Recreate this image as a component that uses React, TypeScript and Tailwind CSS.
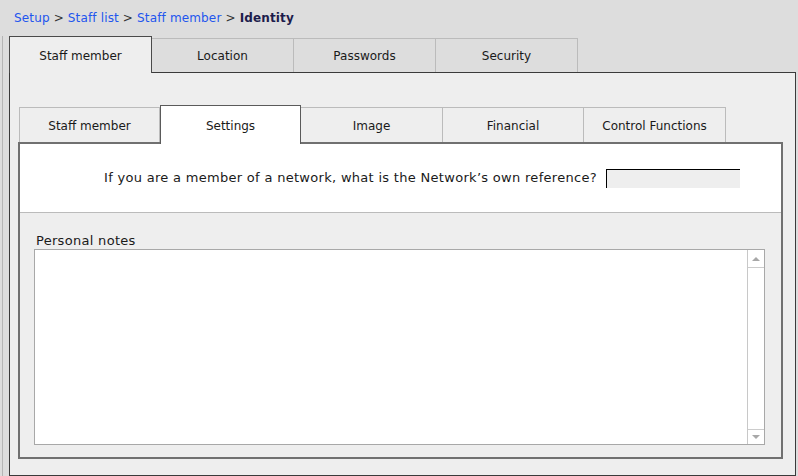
import React from "react";

const outerTabs = ["Staff member", "Location", "Passwords", "Security"];
const innerTabs = ["Staff member", "Settings", "Image", "Financial", "Control Functions"];

function Breadcrumb() {
  return (
    <div className="h-[36px] pl-[14px] pt-[10px] leading-[17px] text-[12px] tracking-[0.15px]">
      <a className="text-[#2255ee]">Setup</a>
      <span className="text-[#333333]"> &gt; </span>
      <a className="text-[#2255ee]">Staff list</a>
      <span className="text-[#333333]"> &gt; </span>
      <a className="text-[#2255ee]">Staff member</a>
      <span className="text-[#333333]"> &gt; </span>
      <span className="font-bold text-[#1c1c4c]">Identity</span>
    </div>
  );
}

function OuterTabRow() {
  return (
    <div className="relative z-10 -mb-px flex h-[37px] items-end">
      {outerTabs.map((t, i) =>
        i === 0 ? (
          <div
            key={t}
            className="flex h-[37px] w-[143px] items-center justify-center border-x border-t border-[#4a4a4a] bg-[#eeeeee] pt-px text-[#1a1a1a]"
          >
            {t}
          </div>
        ) : (
          <div
            key={t}
            className="mb-px flex h-[34px] w-[142px] items-center justify-center border-r border-t border-[#bbbbbb] bg-[#dddddd] text-[#1a1a1a]"
          >
            {t}
          </div>
        )
      )}
    </div>
  );
}

function InnerTabRow() {
  const widths = ["w-[141px] border-l", "w-[141px]", "w-[142px]", "w-[141px]", "w-[142px]"];
  return (
    <div className="relative z-10 -mb-[2px] ml-[9px] flex h-[39px] items-end">
      {innerTabs.map((t, i) =>
        i === 1 ? (
          <div
            key={t}
            className="flex h-[39px] w-[141px] items-center justify-center border-x border-t border-[#5a5a5a] bg-white pt-px text-[#1a1a1a]"
          >
            {t}
          </div>
        ) : (
          <div
            key={t}
            className={`mb-[2px] flex h-[35px] items-center justify-center border-r border-t border-[#bbbbbb] bg-[#eeeeee] pt-px text-[#1a1a1a] ${widths[i]}`}
          >
            {t}
          </div>
        )
      )}
    </div>
  );
}

function NotesBox() {
  return (
    <div className="flex h-[196px] w-[731px] border border-[#a8a8a8] bg-white">
      <textarea className="flex-1 resize-none bg-white p-1 text-[13px] outline-none" />
      <div className="flex w-[17px] flex-col justify-between border-l border-[#c8c8c8]">
        <div className="flex h-[18px] items-center justify-center border-b border-[#cccccc]">
          <svg width="8" height="5" viewBox="0 0 8 5">
            <path d="M0 5 L4 1 L8 5 Z" fill="#a8a8a8" />
          </svg>
        </div>
        <div className="flex h-[15px] items-center justify-center border-t border-[#cccccc]">
          <svg width="8" height="5" viewBox="0 0 8 5">
            <path d="M0 0 L8 0 L4 4 Z" fill="#a8a8a8" />
          </svg>
        </div>
      </div>
    </div>
  );
}

export default function App() {
  return (
    <div
      className="h-[476px] w-[798px] overflow-hidden bg-[#dddddd] text-[12px] text-[#1a1a1a]"
      style={{ fontFamily: '"DejaVu Sans", Verdana, sans-serif' }}
    >
      <Breadcrumb />
      <div className="ml-[2px] flex h-[440px] flex-col border-l border-[#b5b5b5] pl-[6px]">
        <OuterTabRow />
        <div className="h-[404px] w-[787px] border border-[#3a3a3a] bg-[#eeeeee] pt-[32px]">
          <InnerTabRow />
          <div className="ml-[8px] flex h-[317px] w-[765px] flex-col border-2 border-[#707070] bg-white">
            <div className="flex h-[69px] items-center justify-end border-b border-[#bbbbbb] pr-[41px]">
              <span className="mr-[9px] text-[13px] tracking-[0.3px] text-[#1a1a1a]">
                If you are a member of a network, what is the Network’s own reference?
              </span>
              <input
                type="text"
                className="h-[19px] w-[134px] border-l border-t border-black bg-[#eeeeee] px-1 text-[12px] outline-none"
              />
            </div>
            <div className="flex flex-1 flex-col bg-[#eeeeee] pl-[14px] pt-[20px]">
              <div className="pl-[2px] text-[13px] leading-[16px] tracking-[0.3px]">Personal notes</div>
              <NotesBox />
            </div>
          </div>
        </div>
      </div>
    </div>
  );
}
